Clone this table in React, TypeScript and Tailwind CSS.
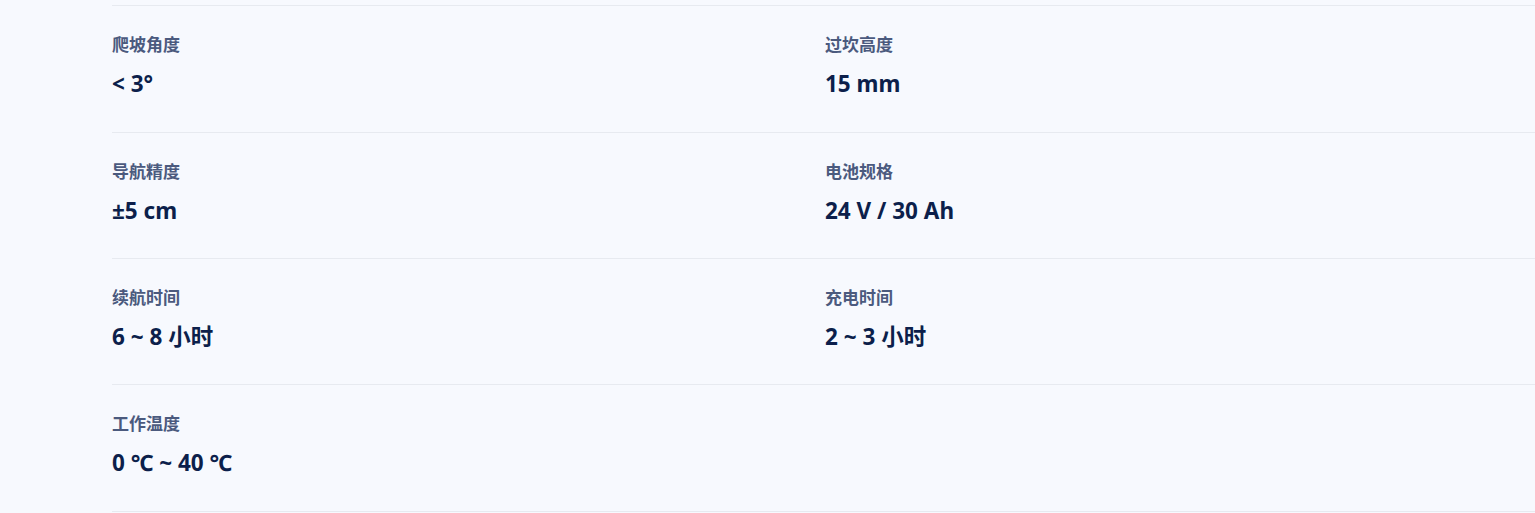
const SPECS: { label: string; value: string }[][] = [
  [
    { label: '爬坡角度', value: '< 3°' },
    { label: '过坎高度', value: '15 mm' },
  ],
  [
    { label: '导航精度', value: '±5 cm' },
    { label: '电池规格', value: '24 V / 30 Ah' },
  ],
  [
    { label: '续航时间', value: '6 ~ 8 小时' },
    { label: '充电时间', value: '2 ~ 3 小时' },
  ],
  [{ label: '工作温度', value: '0 ℃ ~ 40 ℃' }],
]

export default function App() {
  return (
    <div
      className="min-h-[513px] w-full overflow-hidden bg-[#f7f9fe] pt-[5px] pl-[112px]"
      style={{ fontFamily: '"Noto Sans", "Noto Sans CJK SC", sans-serif' }}
    >
      <div className="border-b border-[#e7eaf0]">
        {SPECS.map((row, i) => (
          <div key={i} className="grid grid-cols-[713px_1fr] border-t border-[#e7eaf0]">
            {row.map((s) => (
              <div key={s.label} className={i === 1 || i === 2 ? 'pt-[27px] pb-[32px]' : 'pt-[27px] pb-[33px]'}>
                <div className="text-[17px] leading-[24px] font-semibold text-[#4b5a7e]">{s.label}</div>
                <div className="mt-[12px] text-[22.5px] leading-[30px] font-bold text-[#0c1f4b]">{s.value}</div>
              </div>
            ))}
          </div>
        ))}
      </div>
    </div>
  )
}
